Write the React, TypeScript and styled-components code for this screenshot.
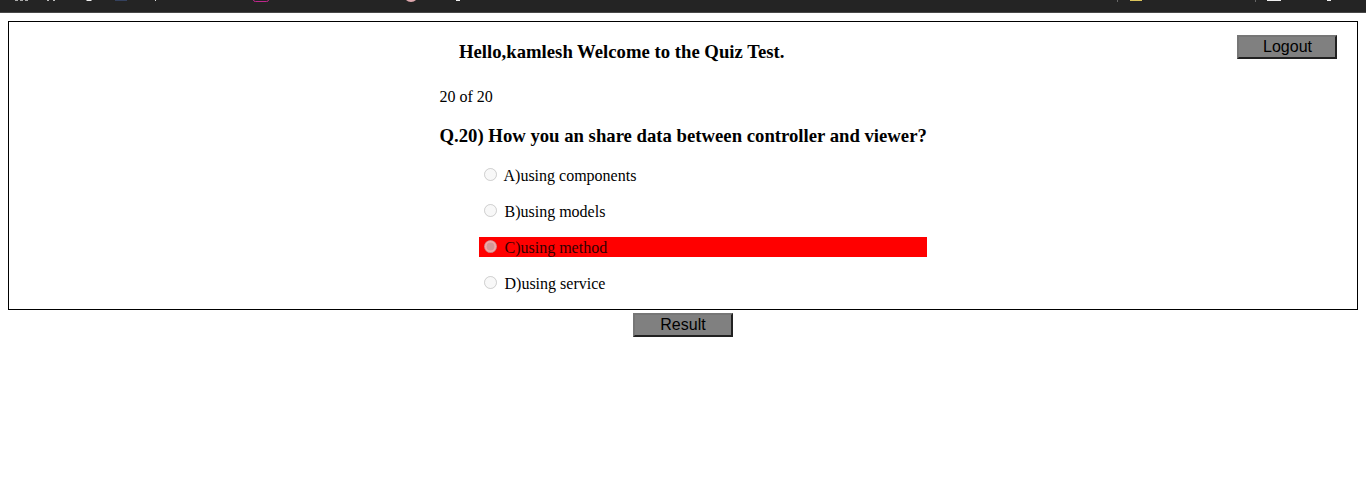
import React from "react";
import styled, { createGlobalStyle } from "styled-components";

const GlobalStyle = createGlobalStyle`
  body {
    margin: 0;
    background: #fff;
    color: #000;
    font: 16px/18px "Liberation Serif", "Times New Roman", serif;
  }
`;

const Page = styled.div`
  min-height: 482px;
  overflow: hidden;
`;

const BrowserBar = styled.header`
  box-sizing: border-box;
  height: 13px;
  background: #242424;
  border-bottom: 1px solid #484848;
`;

const BarMarks = styled.svg`
  display: block;
`;

const QuizBox = styled.main`
  box-sizing: border-box;
  display: grid;
  grid-template-columns: 1fr 487px 1fr;
  height: 289px;
  margin: 8px 8px 0;
  border: 1px solid #000;
`;

const Quiz = styled.section`
  grid-column: 2;
  padding-top: 19px;
`;

const Aside = styled.div`
  display: flex;
  justify-content: flex-end;
  align-items: flex-start;
  padding: 13px 20px 0 0;
`;

const Welcome = styled.h3`
  margin: 0 0 25px 19.5px;
  font-size: 18.72px;
  line-height: 22px;
  white-space: nowrap;
`;

const Progress = styled.div`
  margin-bottom: 19px;
`;

const Question = styled.h3`
  margin: 0 0 18px;
  font-size: 18.72px;
  line-height: 22px;
  white-space: nowrap;
`;

const Options = styled.div`
  display: flex;
  flex-direction: column;
  gap: 16px;
  margin-left: 39px;
`;

const Option = styled.label<{ $wrong?: boolean }>`
  display: flex;
  height: 20px;
  line-height: 22px;
  background: ${(p) => (p.$wrong ? "#f00" : "transparent")};
  color: ${(p) => (p.$wrong ? "#300" : "#000")};
`;

const Radio = styled.input`
  width: 13px;
  height: 13px;
  margin: 3px 7px 0 5px;

  ${Option}:not(:first-child) & {
    margin-right: 8px;
  }
`;

const Button = styled.button<{ $indent?: number }>`
  box-sizing: border-box;
  width: 100px;
  height: 24px;
  padding: 0 0 0 ${(p) => p.$indent ?? 0}px;
  border: 2px solid;
  border-color: #767676 #212121 #212121 #767676;
  background: #808080;
  color: #000;
  font: 16px/18px "Liberation Sans", Arial, sans-serif;
`;

const Footer = styled.footer`
  display: flex;
  justify-content: center;
  padding-top: 3px;
`;

const options = [
  { letter: "A", text: "using components" },
  { letter: "B", text: "using models" },
  { letter: "C", text: "using method", chosen: true },
  { letter: "D", text: "using service" },
];

export default function App() {
  return (
    <Page>
      <GlobalStyle />
      <BrowserBar>
        <BarMarks width="1366" height="12" viewBox="0 0 1366 12" fill="none" aria-hidden="true">
          <path d="M15 0h3v1h-3zM20 0h3v1h-3zM25 0h3v1h-3z" fill="#aaa" />
          <path d="M47 0h2v1h-2zM53 0h2v1h-2z" fill="#bbb" />
          <path d="M86 0h6l-1 1h-4z" fill="#eee" />
          <path d="M115 0h12v1h-12z" fill="#34415e" />
          <path d="M155 0h1v1h-1z" fill="#ddd" />
          <path d="M253.500 0q0 1.500 2 1.500h11q2 0 2-1.500" stroke="#c0268c" />
          <path d="M406 0h10q-2 2-5 2t-5-2z" fill="#dfa8ae" />
          <path d="M456 0h4v1h-4z" fill="#eee" />
          <path d="M1117 0h1v2h-1zM1255 0h1v2h-1z" fill="#666" />
          <path d="M1130 0h12v1h-12z" fill="#dbc45c" />
          <path d="M1267 0h14v1h-14zM1327 0h4v1h-4z" fill="#eee" />
        </BarMarks>
      </BrowserBar>
      <QuizBox>
        <Quiz>
          <Welcome>Hello,kamlesh Welcome to the Quiz Test.</Welcome>
          <Progress>20 of 20</Progress>
          <Question>Q.20) How you an share data between controller and viewer?</Question>
          <Options>
            {options.map((o) => (
              <Option key={o.letter} $wrong={o.chosen}>
                <Radio type="radio" name="answer" disabled defaultChecked={o.chosen} />
                {o.letter}){o.text}
              </Option>
            ))}
          </Options>
        </Quiz>
        <Aside>
          <Button type="button" $indent={1}>Logout</Button>
        </Aside>
      </QuizBox>
      <Footer>
        <Button type="button">Result</Button>
      </Footer>
    </Page>
  );
}
